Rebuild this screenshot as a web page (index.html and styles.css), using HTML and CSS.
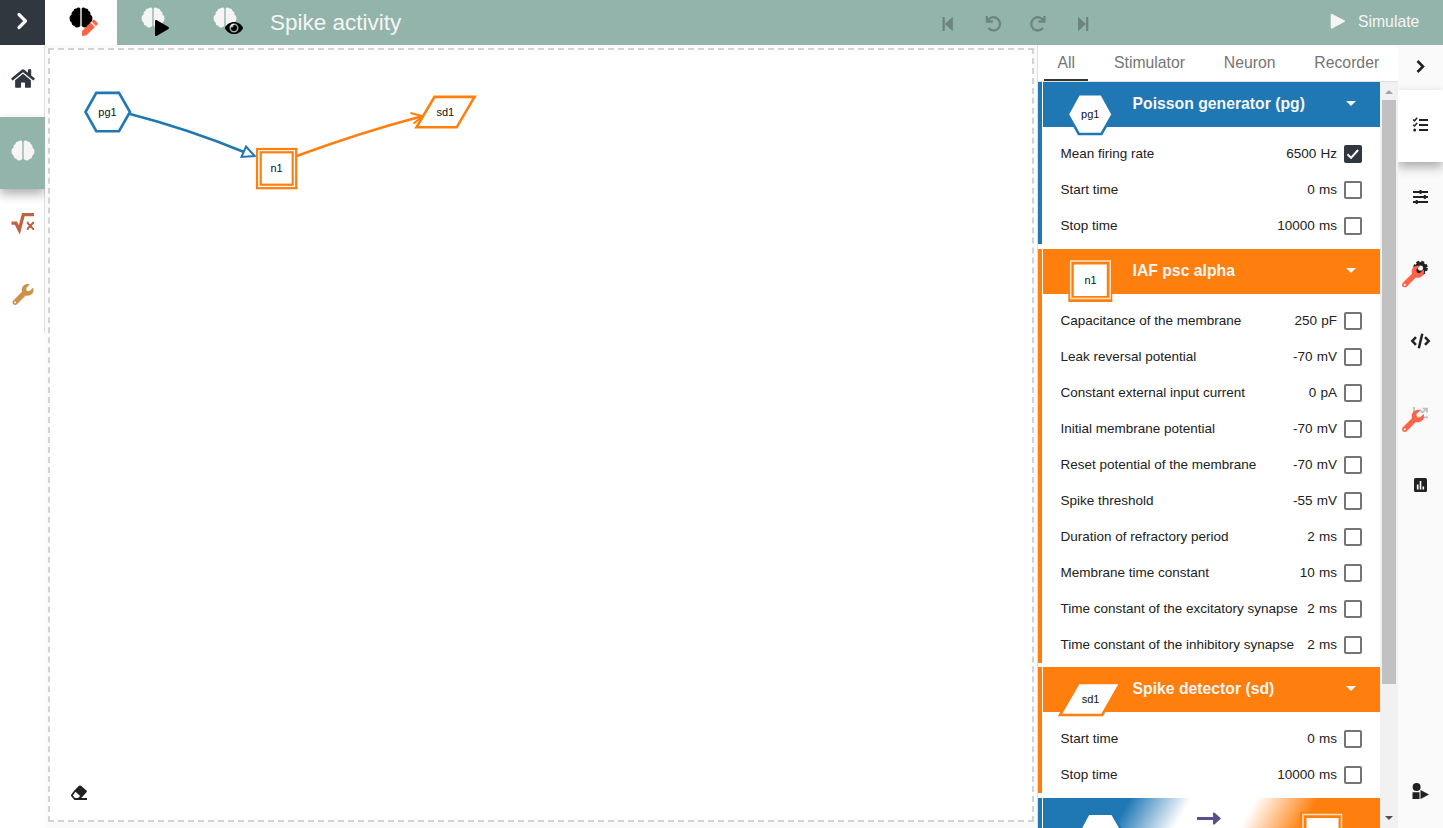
FILE: index.html
```html
<!DOCTYPE html>
<html lang="en">
<head>
<meta charset="utf-8">
<title>Spike activity</title>
<link rel="stylesheet" href="styles.css">
</head>
<body>
<svg class="defs" width="0" height="0">
  <defs>
    <symbol id="brain" viewBox="0 0 24 22">
      <path d="M11.3 1.6C10.6.2 8.400 0 7.400 1.500 5.500 1.200 4.300 2.600 4.300 4.200 2.600 4.800 2 6.300 2.400 7.800.6 8.900 0 10.500.4 12c-.1 1.700.6 3 2 3.800-.2 1.900 1 3.100 2.800 3.300C6.400 21.600 10 21.600 11.300 19.300z"/>
      <path d="M12.700 1.600C13.400.2 15.600 0 16.600 1.500 18.500 1.200 19.700 2.600 19.700 4.200c1.700.6 2.300 2.100 1.900 3.600 1.800 1.100 2.400 2.700 2 4.200.1 1.700-.6 3-2 3.800.2 1.900-1 3.100-2.800 3.300C17.600 21.600 14 21.600 12.700 19.300z"/>
    </symbol>
    <symbol id="wrench" viewBox="0 0 512 512"><path d="M507.73 109.1c-2.24-9.03-13.54-12.09-20.12-5.51l-74.36 74.36-67.88-11.31-11.31-67.88 74.36-74.36c6.62-6.62 3.43-17.9-5.66-20.16-47.38-11.74-99.55.91-136.58 37.93-39.64 39.64-50.55 97.1-34.05 147.2L18.74 402.76c-24.99 24.99-24.99 65.51 0 90.5 24.99 24.99 65.51 24.99 90.5 0l213.21-213.21c50.12 16.71 107.47 5.68 147.37-34.22 37.07-37.07 49.7-89.32 37.91-136.73zM64 472c-13.25 0-24-10.75-24-24 0-13.26 10.75-24 24-24s24 10.74 24 24c0 13.25-10.75 24-24 24z"/></symbol>
  </defs>
</svg>

<header class="topbar">
  <button class="menu"><svg width="45" height="45"><path class="line-white" d="M19 14.500l6.500 6.500-6.500 6.500"/></svg></button>
  <nav class="modes">
    <a class="mode mode-active"><svg width="72" height="45">
      <use href="#brain" x="24" y="7" width="24" height="21.500"/>
      <path class="tomato" d="M37 31l8.500-8.500 4.500 4.500-8.800 8.400-4.200.7zM46.500 21.500l1.500-1.400q.8-.6 1.600 0l2.900 2.900q.6.800 0 1.600l-1.500 1.400z"/></svg></a>
    <a class="mode"><svg width="72" height="45">
      <use class="pale" href="#brain" x="24" y="7" width="24" height="21.500"/>
      <path d="M38 21q0-1.500 1.500-.9l12 7q1 .9 0 1.800l-12 7q-1.500.6-1.500-.9z"/></svg></a>
    <a class="mode"><svg width="72" height="45">
      <use class="pale" href="#brain" x="24" y="7" width="24" height="21.500"/>
      <svg x="36" y="20" width="18" height="16" viewBox="0 0 576 512"><path d="M572.52 241.4C518.29 135.59 410.93 64 288 64S57.68 135.64 3.48 241.41a32.35 32.35 0 0 0 0 29.19C57.71 376.41 165.07 448 288 448s230.32-71.64 284.52-177.41a32.35 32.35 0 0 0 0-29.19zM288 400a144 144 0 1 1 144-144 143.93 143.93 0 0 1-144 144zm0-240a95.31 95.31 0 0 0-25.31 3.79 47.85 47.85 0 0 1-66.9 66.9A95.78 95.78 0 1 0 288 160z"/></svg></svg></a>
  </nav>
  <h1 class="title">Spike activity</h1>
  <div class="history">
    <svg width="45" height="45"><path class="muted" d="M17.500 17h2.300v14h-2.300zM19.800 24l8-7.200v14.400z"/></svg>
    <svg width="45" height="45"><path class="muted-line" d="M17.800 20.500a6.600 6.600 0 1 1 .6 7.600M16.800 16v5.500h6"/></svg>
    <svg width="45" height="45"><path class="muted-line" d="M28.500 20.500a6.600 6.600 0 1 0-.6 7.600M29.500 16v5.500h-6"/></svg>
    <svg width="45" height="45"><path class="muted" d="M28.300 17h-2.300v14h2.300zM26 24l-8-7.200v14.400z"/></svg>
  </div>
  <button class="simulate"><svg width="16" height="16"><path class="pale" d="M.7 1Q.7-.5 2.200.1l12.500 6.300q.8.700 0 1.400L2.200 14.500q-1.500.6-1.500-.9z"/></svg><span>Simulate</span></button>
</header>

<main class="body">
  <nav class="side">
    <a class="side-item"><svg class="navy" width="24" height="21" viewBox="0 0 576 512"><path d="M280.37 148.26L96 300.11V464a16 16 0 0 0 16 16l112.06-.29a16 16 0 0 0 15.92-16V368a16 16 0 0 1 16-16h64a16 16 0 0 1 16 16v95.64a16 16 0 0 0 16 16.05L464 480a16 16 0 0 0 16-16V300L295.67 148.26a12.19 12.19 0 0 0-15.3 0zM571.6 251.47L488 182.56V44.05a12 12 0 0 0-12-12h-56a12 12 0 0 0-12 12v72.61L318.47 43a48 48 0 0 0-61 0L4.34 251.47a12 12 0 0 0-1.6 16.9l25.5 31A12 12 0 0 0 45.15 301l235.22-193.74a12.19 12.19 0 0 1 15.3 0L530.9 301a12 12 0 0 0 16.9-1.6l25.5-31a12 12 0 0 0-1.7-16.93z"/></svg></a>
    <a class="side-item side-active"><svg class="pale" width="24" height="22"><use href="#brain" width="24" height="21.500"/></svg></a>
    <a class="side-item"><svg width="24" height="22"><path class="root" d="M.5 11.200h4.400L8.300 18 12.300 2.700H23"/><path class="cross" d="M16.500 11l5.500 5.600m0-5.600l-5.500 5.600M15.800 10.700h1.800m3.700 0h1.800m-7.300 6.200h1.800m3.700 0h1.800"/></svg></a>
    <a class="side-item"><svg class="amber" width="22" height="21"><use href="#wrench" width="22" height="21"/></svg></a>
  </nav>

  <section class="workspace">
    <div class="board">
      <svg class="graph" width="982" height="770" viewBox="50 50 982 770">
        <g class="blue-stroke">
          <path d="M130 114Q188 129 244 152"/>
          <path class="tip" d="M246 146.500L254.700 156 241.500 157z"/>
          <path d="M85.500 112L96.300 92.900H119L130 112 119 131.200H96.300z"/>
        </g>
        <g class="orange-stroke">
          <path d="M296 156.300Q360 132.500 422 116.200"/>
          <path class="tip" d="M410.500 113L423 116.200 413.500 123.500"/>
          <path class="fill" d="M434.500 96.900H474.500L456.700 127.300H416.500z"/>
          <rect class="thin" x="257" y="149" width="39.200" height="39.200"/>
          <rect class="thin" x="260.700" y="152.300" width="32" height="32.400"/>
        </g>
        <g><text x="107.500" y="116">pg1</text><text x="276.500" y="172">n1</text><text x="445.300" y="116">sd1</text></g>
        <path class="ink" d="M74.300 790.500l4.700-4.700q1-.8 2 0l5.500 4.700q.9.900 0 1.800l-5.200 5.700h5.700v2H74.500l-3.200-3.700q-.7-.9 0-1.800z"/>
        <path d="M75.500 791.800l4.700 4.200-2.200 2.100h-3l-2.200-2.700z" fill="#fff"/>
      </svg>
    </div>
  </section>

  <aside class="panel">
    <div class="tabs"><a class="tab tab-active">All</a><a class="tab">Stimulator</a><a class="tab">Neuron</a><a class="tab">Recorder</a></div>
    <div class="scroll">
      <div class="cards">
        <section class="card blue">
          <div class="card-head">
            <svg class="shape" width="64" height="50"><path class="blue-stroke fill" d="M9.700 25.300L20.800 5.100H43.500L54.700 25.300 43.500 45H20.800z"/><text x="32.300" y="29">pg1</text></svg>
            <h2>Poisson generator (pg)</h2><i class="caret"></i>
          </div>
          <div class="rows">
            <div class="row"><span>Mean firing rate</span><b>6500</b><em>Hz</em><i class="check on"><svg width="14" height="14"><path d="M1.500 7.200l3.600 3.600 7-7.800"/></svg></i></div>
            <div class="row"><span>Start time</span><b>0</b><em>ms</em><i class="check"></i></div>
            <div class="row"><span>Stop time</span><b>10000</b><em>ms</em><i class="check"></i></div>
          </div>
        </section>
        <section class="card orange">
          <div class="card-head">
            <svg class="shape" width="64" height="50"><rect class="orange-fill" x="10.300" y="3.800" width="44" height="42.200"/><rect class="frame" x="12.700" y="5" width="39.500" height="37.500"/><rect class="white" x="15.800" y="8.500" width="33" height="31.500"/><text x="32.500" y="28">n1</text></svg>
            <h2>IAF psc alpha</h2><i class="caret"></i>
          </div>
          <div class="rows">
            <div class="row"><span>Capacitance of the membrane</span><b>250</b><em>pF</em><i class="check"></i></div>
            <div class="row"><span>Leak reversal potential</span><b>-70</b><em>mV</em><i class="check"></i></div>
            <div class="row"><span>Constant external input current</span><b>0</b><em>pA</em><i class="check"></i></div>
            <div class="row"><span>Initial membrane potential</span><b>-70</b><em>mV</em><i class="check"></i></div>
            <div class="row"><span>Reset potential of the membrane</span><b>-70</b><em>mV</em><i class="check"></i></div>
            <div class="row"><span>Spike threshold</span><b>-55</b><em>mV</em><i class="check"></i></div>
            <div class="row"><span>Duration of refractory period</span><b>2</b><em>ms</em><i class="check"></i></div>
            <div class="row"><span>Membrane time constant</span><b>10</b><em>ms</em><i class="check"></i></div>
            <div class="row"><span>Time constant of the excitatory synapse</span><b>2</b><em>ms</em><i class="check"></i></div>
            <div class="row"><span>Time constant of the inhibitory synapse</span><b>2</b><em>ms</em><i class="check"></i></div>
          </div>
        </section>
        <section class="card orange">
          <div class="card-head">
            <svg class="shape" width="64" height="50"><path class="orange-stroke fill" d="M20.500 9H62.500L44.200 41H2z"/><text x="32.500" y="29">sd1</text></svg>
            <h2>Spike detector (sd)</h2><i class="caret"></i>
          </div>
          <div class="rows">
            <div class="row"><span>Start time</span><b>0</b><em>ms</em><i class="check"></i></div>
            <div class="row"><span>Stop time</span><b>10000</b><em>ms</em><i class="check"></i></div>
          </div>
        </section>
        <section class="card blue">
          <div class="card-head link-head">
            <svg width="337" height="45">
              <path class="blue-stroke fill" d="M34.500 36L45.300 15.800H69.300L81 36 70 55H45z"/>
              <path class="arrow" d="M154 20.500h17"/><path class="arrow-tip" d="M170 14.800q1-.7 2 .3l6 5.400-6 5.400q-1 1-2 .3z"/>
              <rect class="orange-fill" x="257" y="14" width="42" height="40"/><rect class="frame" x="260" y="16.500" width="38.500" height="39"/><rect class="white" x="263.500" y="20" width="32" height="32"/>
            </svg>
          </div>
        </section>
      </div>
      <div class="track"><i class="up"></i><div class="thumb"></div><i class="down"></i></div>
    </div>
  </aside>

  <nav class="tools">
    <svg class="ink collapse" width="45" height="45"><path class="line-ink" d="M19.500 16l5.500 5.500-5.500 5.500"/></svg>
    <a class="tool tool-active"><svg width="45" height="72"><path class="ink" d="M21 29h9v2h-9zM21 34h9v2h-9zM21 39h9v2h-9z"/><path class="ticks" d="M15.200 29.500l1.300 1.300 2.700-3M15.200 34.700l1.300 1.300 2.700-3"/><circle class="ink" cx="16.700" cy="40" r="1.500"/></svg></a>
    <a class="tool"><svg width="45" height="72"><path class="ink" d="M15 29h15v1.900H15zM15 34h15v1.900H15zM15 39h15v1.900H15zM21.500 28h2v4h-2zM25.800 33h2v4h-2zM17.700 38h2v4h-2z"/></svg></a>
    <a class="tool"><svg width="45" height="72"><circle class="gear" cx="22.500" cy="34" r="4.300"/><circle class="gear-teeth" cx="22.500" cy="34" r="6.300"/><use class="tomato" href="#wrench" x="4" y="32.500" width="22" height="22" transform="translate(0 -1)"/><circle class="gear-hole" cx="22.500" cy="34.500" r="1.700"/></svg></a>
    <a class="tool"><svg width="45" height="72"><path class="code" d="M18 31.200L14.300 35l3.700 3.800M27 31.200l3.700 3.800-3.700 3.800M24.300 27.700l-3.500 14.600"/></svg></a>
    <a class="tool"><svg width="45" height="72"><path class="chart-ghost" d="M16 29v10.300h14M19 34l3-2 2.500 2.500 4-4M24.500 30.500h4.500v4"/><use class="tomato" href="#wrench" x="4" y="32" width="22" height="22"/></svg></a>
    <a class="tool"><svg width="45" height="72"><rect class="ink" x="16" y="28" width="13" height="14" rx="1.500"/><path class="bars" d="M19.700 34.500v5M22.500 31v8.500M25.300 36.500v3"/></svg></a>
    <a class="tool last"><svg width="45" height="72"><circle class="ink" cx="18.600" cy="31" r="4"/><path class="ink" d="M14.500 36.200h7v6.800h-7zM22.500 33.900l8.500 4.600-8.500 4.500z"/></svg></a>
  </nav>
</main>
</body>
</html>
```
FILE: styles.css
```css
* { box-sizing: border-box; }
body { margin: 0; height: 828px; overflow: hidden; background: #fafafa; color: #212121; font-family: "Liberation Sans", Arial, sans-serif; display: flex; flex-direction: column; }
svg { display: block; flex: none; }
svg text { font-size: 11px; text-anchor: middle; fill: #111; }
.defs { position: absolute; }
button { border: 0; padding: 0; background: none; font: inherit; color: inherit; }

.topbar { height: 45px; flex: none; display: flex; background: #93b4ab; color: #f5f5f5; }
.menu { width: 45px; background: #30373f; }
.line-white { fill: none; stroke: #f5f5f5; stroke-width: 3.2; stroke-linecap: round; stroke-linejoin: round; }
.modes { display: flex; }
.mode { width: 72px; height: 45px; }
.mode-active { background: #fff; }
.title { flex: none; margin: 0 0 0 9px; width: 655px; font-size: 22.500px; font-weight: 400; line-height: 45px; }
.history { display: flex; flex: none; }
.muted { fill: #6c857e; }
.muted-line { fill: none; stroke: #6c857e; stroke-width: 2.300; }
.pale { fill: #f5f5f5; }
.tomato { fill: #ff6347; }
.simulate { flex: none; display: flex; align-items: center; gap: 12px; margin-left: 225px; font-size: 15.750px; height: 43px; }

.body { flex: 1; display: flex; min-height: 0; }
.side { width: 45px; flex: none; background: linear-gradient(#e0e0e0, #e0e0e0) 44px 0 / 1px 288px no-repeat #fff; }
.side-item { display: flex; width: 45px; height: 72px; justify-content: center; padding-top: 23px; }
.side-active { background: #93b4ab; box-shadow: 0 5px 10px rgba(0,0,0,.32); clip-path: inset(-20px 0 -20px 0); }

.navy { fill: #30373f; }
.amber { fill: #cd9148; }
.root { fill: none; stroke: #c0623e; stroke-width: 3.300; }
.cross { fill: none; stroke: #c0623e; stroke-width: 2; }

.workspace { width: 993px; flex: none; padding: 3px 4px 6px 3px; }
.board { width: 986px; height: 774px; border: 2px dashed #d3d3d3; background: #fff; }
.blue-stroke { fill: none; stroke: #1f77b4; stroke-width: 2.600; }
.orange-stroke { fill: none; stroke: #ff7f0e; stroke-width: 2.600; }
.tip { stroke-width: 2; fill: none; }
.thin { stroke-width: 2.200; }
.fill { fill: #fff; }
.white { fill: #fff; }
.frame { fill: none; stroke: #ffe3c8; stroke-width: 1.500; }
.orange-fill { fill: #ff7f0e; }
.ink { fill: #212121; }

.panel { width: 360px; flex: none; background: #fff; display: flex; flex-direction: column; box-shadow: -1px 0 #e0e0e0; }
.tabs { height: 37px; flex: none; display: flex; border-bottom: 1px solid #e0e0e0; font-size: 15.750px; line-height: 35px; color: #757575; padding-left: 6px; }
.tab { padding: 0 13.300px 0 13.600px; margin-right: 12px; height: 36px; }
.tab-active { border-bottom: 2px solid #30373f; }
.scroll { flex: 1; min-height: 0; display: flex; overflow: hidden; }
.cards { width: 342px; flex: none; }
.card { padding-left: 5px; margin-bottom: 5px; background-size: 4px 100%; background-repeat: no-repeat; }
.blue { background-image: linear-gradient(#1f77b4, #1f77b4); }
.orange { background-image: linear-gradient(#ff7f0e, #ff7f0e); }
.card:nth-child(2) { margin-bottom: 4px; }
.card-head { height: 45px; display: flex; color: #f5f5f5; }
.blue .card-head { background: #1f77b4; }
.orange .card-head { background: #ff7f0e; }
.shape { margin: 7px 10px 0 15px; overflow: visible; }
h2 { margin: 0 0 0 .5px; width: 213px; flex: none; font-size: 15.750px; line-height: 44px; white-space: nowrap; }
.caret, .up, .down { display: block; width: 0; height: 0; border: 5px solid transparent; }
.caret { border-width: 5.500px 5.500px 0; border-top-color: #f5f5f5; margin-top: 19px; }
.rows { padding: 9px 18px 0 17.500px; }
.row { height: 36px; display: flex; align-items: center; font-size: 13.500px; line-height: 16px; white-space: nowrap; color: #212121; }
.row span { flex: 1; }
.row b, .row em { font-weight: 400; font-style: normal; margin-left: 4.300px; }
.check { flex: none; width: 18px; height: 18px; margin-left: 7px; border: 2px solid #757575; border-radius: 2px; }
.check path { fill: none; stroke: #fff; stroke-width: 2; }
.on { background: #30373f; border-color: #30373f; }
.card .link-head { background: linear-gradient(120deg, #1f77b4 24%, #fff 41%, #fff 59%, #ff7f0e 76%); }
.arrow { stroke: #5a4f8c; stroke-width: 3; }
.arrow-tip { fill: #5a4f8c; }
.track { width: 18px; flex: none; background: #f1f1f1; padding: 0 2px; display: flex; flex-direction: column; }
.up { margin: 8px 3px 6px; border-width: 0 4px 4px; border-bottom-color: #a3a3a3; }
.thumb { height: 584px; width: 14px; flex: none; background: #c1c1c1; }
.down { margin: 132px 3px 0; border-width: 4px 4px 0; border-top-color: #505050; }

.tools { flex: 1; display: flex; flex-direction: column; }
.tool { height: 72px; flex: none; }
.tool-active { background: #fff; box-shadow: 0 5px 10px rgba(0,0,0,.32); clip-path: inset(-20px 0 -20px 0); }
.last { margin-top: 234px; }
.line-ink { fill: none; stroke: #212121; stroke-width: 2.600; }
.ticks { fill: none; stroke: #212121; stroke-width: 1.500; }
.gear { fill: none; stroke: #212121; stroke-width: 3.500; }
.gear-teeth { fill: none; stroke: #212121; stroke-width: 2; stroke-dasharray: 3 1.950; }
.gear-hole { fill: #fafafa; }
.code { fill: none; stroke: #212121; stroke-width: 2.500; }
.chart-ghost { fill: none; stroke: #bdbdbd; stroke-width: 1.700; }
.bars { stroke: #fff; stroke-width: 1.600; }
```
